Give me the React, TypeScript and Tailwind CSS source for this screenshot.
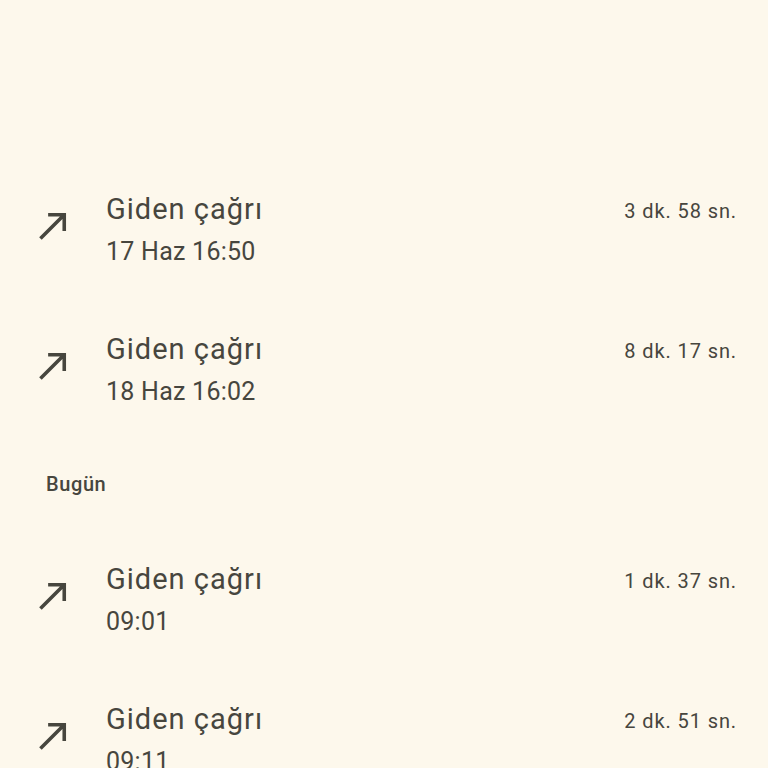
import React from "react";

interface Call {
  id: number;
  title: string;
  time: string;
  duration: string;
}

const earlier: Call[] = [
  { id: 1, title: "Giden çağrı", time: "17 Haz 16:50", duration: "3 dk. 58 sn." },
  { id: 2, title: "Giden çağrı", time: "18 Haz 16:02", duration: "8 dk. 17 sn." },
];

const today: Call[] = [
  { id: 3, title: "Giden çağrı", time: "09:01", duration: "1 dk. 37 sn." },
  { id: 4, title: "Giden çağrı", time: "09:11", duration: "2 dk. 51 sn." },
];

function OutgoingIcon() {
  return (
    <svg viewBox="0 0 24 24" className="w-[43px] h-[43px] shrink-0 mt-[44px] fill-[#47463e]">
      <path d="M9 5v2h6.59L4 18.59 5.41 20 17 8.41V15h2V5z" />
    </svg>
  );
}

function CallRow({ call }: { call: Call }) {
  return (
    <div className="flex h-[140px] pl-[32px] pr-[31px]">
      <OutgoingIcon />
      <div className="flex-1 ml-[31px] pt-[29px]">
        <p className="text-[29px] leading-[40px] tracking-[0.035em]">{call.title}</p>
        <p className="text-[25px] leading-[46px] tracking-[0.01em]">{call.time}</p>
      </div>
      <p className="text-[20px] leading-[28px] mt-[37px] tracking-[0.045em]">{call.duration}</p>
    </div>
  );
}

export default function App() {
  return (
    <div
      className="w-[768px] h-[768px] overflow-hidden bg-[#fdf8ec] text-[#47463e]"
      style={{ fontFamily: "Roboto, 'Noto Sans', sans-serif" }}
    >
      <div className="h-[160px]"></div>
      {earlier.map((c) => (
        <CallRow key={c.id} call={c} />
      ))}
      <div className="h-[90px] pt-[30px] pl-[46px]">
        <p className="text-[20px] leading-[28px] font-medium tracking-[0.03em]">Bugün</p>
      </div>
      {today.map((c) => (
        <CallRow key={c.id} call={c} />
      ))}
    </div>
  );
}
